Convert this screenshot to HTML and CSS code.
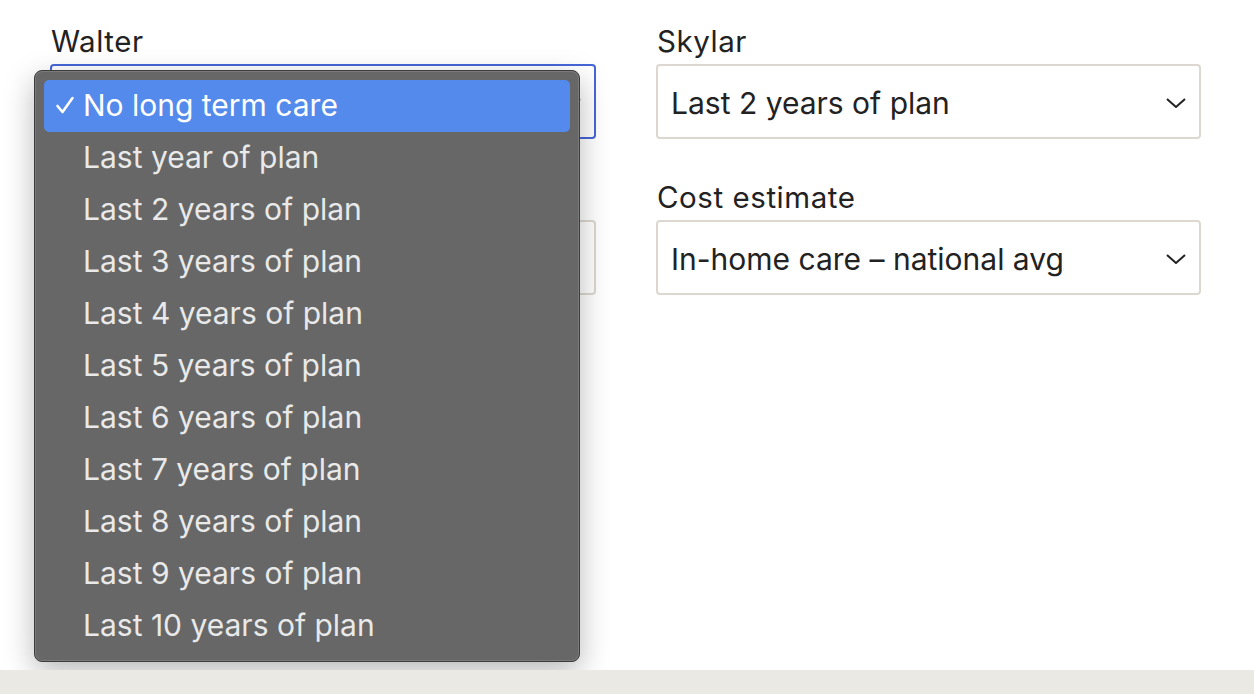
FILE: index.html
```html
<!DOCTYPE html>
<html>
<head>
<meta charset="utf-8">
<link rel="stylesheet" href="styles.css">
</head>
<body>
<div class="page">
  <div class="grid">
    <div class="col">
      <div class="field">
        <div class="label">Walter</div>
        <div class="select focused">
          <span class="value"></span>
          <svg class="chev" viewBox="0 0 20 10" width="20" height="10"><path d="M1 1 L10 9 L19 1" fill="none" stroke="#222" stroke-width="2"/></svg>
        </div>
        <div class="menu">
          <div class="item selected"><svg class="check" viewBox="0 0 20 20" width="20" height="20"><path d="M2.5 11 L7.5 17 L17.5 3" fill="none" stroke="#fff" stroke-width="2.6" stroke-linecap="round" stroke-linejoin="round"/></svg>No long term care</div>
          <div class="item">Last year of plan</div>
          <div class="item">Last 2 years of plan</div>
          <div class="item">Last 3 years of plan</div>
          <div class="item">Last 4 years of plan</div>
          <div class="item">Last 5 years of plan</div>
          <div class="item">Last 6 years of plan</div>
          <div class="item">Last 7 years of plan</div>
          <div class="item">Last 8 years of plan</div>
          <div class="item">Last 9 years of plan</div>
          <div class="item">Last 10 years of plan</div>
        </div>
      </div>
      <div class="field">
        <div class="label"></div>
        <div class="select">
          <span class="value"></span>
        </div>
      </div>
    </div>
    <div class="col">
      <div class="field">
        <div class="label">Skylar</div>
        <div class="select">
          <span class="value">Last 2 years of plan</span>
          <svg class="chev" viewBox="0 0 20 10" width="20" height="10"><path d="M1 1 L10 9 L19 1" fill="none" stroke="#222" stroke-width="2"/></svg>
        </div>
      </div>
      <div class="field">
        <div class="label">Cost estimate</div>
        <div class="select">
          <span class="value">In-home care – national avg</span>
          <svg class="chev" viewBox="0 0 20 10" width="20" height="10"><path d="M1 1 L10 9 L19 1" fill="none" stroke="#222" stroke-width="2"/></svg>
        </div>
      </div>
    </div>
  </div>
</div>
<div class="footer"></div>
</body>
</html>
```
FILE: styles.css
```css
html, body {
  margin: 0;
  padding: 0;
  background: #ffffff;
  font-family: "Inter", "Liberation Sans", sans-serif;
  color: #222222;
}
.page {
  height: 670px;
  box-sizing: border-box;
  padding: 24px 0 0 50px;
  overflow: hidden;
}
.grid {
  display: grid;
  grid-template-columns: 546px 545px;
  column-gap: 60px;
}
.col {
  display: flex;
  flex-direction: column;
  gap: 41px;
}
.field {
  position: relative;
  display: flex;
  flex-direction: column;
  gap: 6px;
}
.label {
  font-size: 29.5px;
  line-height: 34px;
  height: 34px;
  letter-spacing: 0.55px;
  color: #222;
  padding-left: 1px;
}
.select {
  height: 75px;
  box-sizing: border-box;
  border: 2px solid #dcd8cf;
  border-radius: 4px;
  background: #fff;
  display: flex;
  align-items: center;
  justify-content: space-between;
  padding: 2px 13px 0 13px;
  font-size: 30px;
  color: #222;
}
.select.focused {
  border-color: #4766d8;
}
.chev {
  width: 20px;
  height: 10px;
}
.menu {
  position: absolute;
  left: -16px;
  top: 46px;
  width: 546px;
  box-sizing: border-box;
  padding: 9px;
  background: #666766;
  border: 1px solid #3c3c3c;
  border-radius: 8px;
  box-shadow: inset 0 0 0 1px #7a7a7a, 0 10px 30px rgba(0,0,0,0.28);
  z-index: 5;
}
.item {
  height: 52px;
  box-sizing: border-box;
  padding-bottom: 2px;
  display: flex;
  align-items: center;
  padding-left: 39px;
  font-size: 30px;
  color: #e9e9e9;
  border-radius: 5px;
  position: relative;
}
.item.selected {
  background: #548aeb;
  color: #ffffff;
}
.check {
  position: absolute;
  left: 11px;
  top: 15px;
  width: 20px;
  height: 20px;
}
.footer {
  height: 24px;
  background: #ebe9e4;
}
```
